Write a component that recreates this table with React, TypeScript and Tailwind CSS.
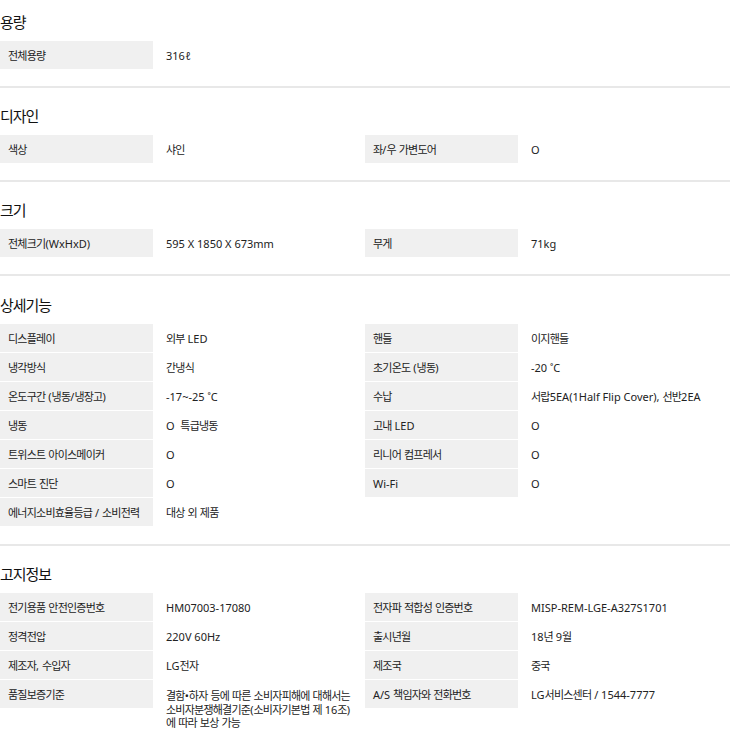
import React from "react";

interface Spec {
  label: string;
  value: string | string[];
}

interface SectionProps {
  title: string;
  items: Spec[];
  className?: string;
}

// hangul runs get tighter spacing so they sit as narrow as the latin text
const Ko = ({ text }: { text: string }) => (
  <>
    {text.split(/([\uAC00-\uD7A3]+)/).map((part, i) =>
      /[\uAC00-\uD7A3]/.test(part) ? (
        <span key={i} className="tracking-[-0.07em]">
          {part}
        </span>
      ) : (
        <React.Fragment key={i}>{part}</React.Fragment>
      )
    )}
  </>
);

const SpecRow = ({ label, value }: Spec) => (
  <div className="flex items-start">
    <div className="w-[153px] h-[28px] shrink-0 bg-[#f0f0f0] pl-2 pt-[3px] flex items-center text-[#222] whitespace-nowrap">
      <span>
        <Ko text={label} />
      </span>
    </div>
    <div className="w-[212px] pl-[13px] pt-[8px] leading-[14px] text-[#222] whitespace-pre">
      {Array.isArray(value) ? (
        <div className="leading-[13.5px] pt-[1px]">
          {value.map((line, i) => (
            <div key={i}>
              <Ko text={line} />
            </div>
          ))}
        </div>
      ) : (
        <Ko text={value} />
      )}
    </div>
  </div>
);

const Section = ({ title, items, className }: SectionProps) => (
  <section className={className ?? "pt-[18px] pb-[17px] border-b-2 border-[#e8e8e8]"}>
    <h3 className="text-[15px] leading-[20px] text-[#111] mb-[9px] tracking-[-0.07em]">{title}</h3>
    <div className="grid grid-cols-2 gap-y-px">
      {items.map((it, i) => (
        <SpecRow key={i} label={it.label} value={it.value} />
      ))}
    </div>
  </section>
);

const capacity: Spec[] = [{ label: "전체용량", value: "316ℓ" }];

const design: Spec[] = [
  { label: "색상", value: "샤인" },
  { label: "좌/우 가변도어", value: "O" },
];

const size: Spec[] = [
  { label: "전체크기(WxHxD)", value: "595 X 1850 X 673mm" },
  { label: "무게", value: "71kg" },
];

const features: Spec[] = [
  { label: "디스플레이", value: "외부 LED" },
  { label: "핸들", value: "이지핸들" },
  { label: "냉각방식", value: "간냉식" },
  { label: "초기온도 (냉동)", value: "-20 ˚C" },
  { label: "온도구간 (냉동/냉장고)", value: "-17~-25 ˚C" },
  { label: "수납", value: "서랍5EA(1Half Flip Cover), 선반2EA" },
  { label: "냉동", value: "O  특급냉동" },
  { label: "고내 LED", value: "O" },
  { label: "트위스트 아이스메이커", value: "O" },
  { label: "리니어 컴프레서", value: "O" },
  { label: "스마트 진단", value: "O" },
  { label: "Wi-Fi", value: "O" },
  { label: "에너지소비효율등급 / 소비전력", value: "대상 외 제품" },
];

const notice: Spec[] = [
  { label: "전기용품 안전인증번호", value: "HM07003-17080" },
  { label: "전자파 적합성 인증번호", value: "MISP-REM-LGE-A327S1701" },
  { label: "정격전압", value: "220V 60Hz" },
  { label: "출시년월", value: "18년 9월" },
  { label: "제조자, 수입자", value: "LG전자" },
  { label: "제조국", value: "중국" },
  {
    label: "품질보증기준",
    value: [
      "결함•하자 등에 따른 소비자피해에 대해서는",
      "소비자분쟁해결기준(소비자기본법 제 16조)",
      "에 따라 보상 가능",
    ],
  },
  { label: "A/S 책임자와 전화번호", value: "LG서비스센터 / 1544-7777" },
];

export default function App() {
  return (
    <div
      className="w-[730px] bg-white text-[11px]"
      style={{ fontFamily: '"Noto Sans", "Noto Sans CJK KR", sans-serif' }}
    >
      <Section title="용량" items={capacity} className="pt-[12px] pb-[17px] border-b-2 border-[#e8e8e8]" />
      <Section title="디자인" items={design} />
      <Section title="크기" items={size} />
      <Section title="상세기능" items={features} className="pt-[19px] pb-[18px] border-b-2 border-[#e8e8e8]" />
      <Section title="고지정보" items={notice} className="pt-[18px] pb-4" />
    </div>
  );
}
